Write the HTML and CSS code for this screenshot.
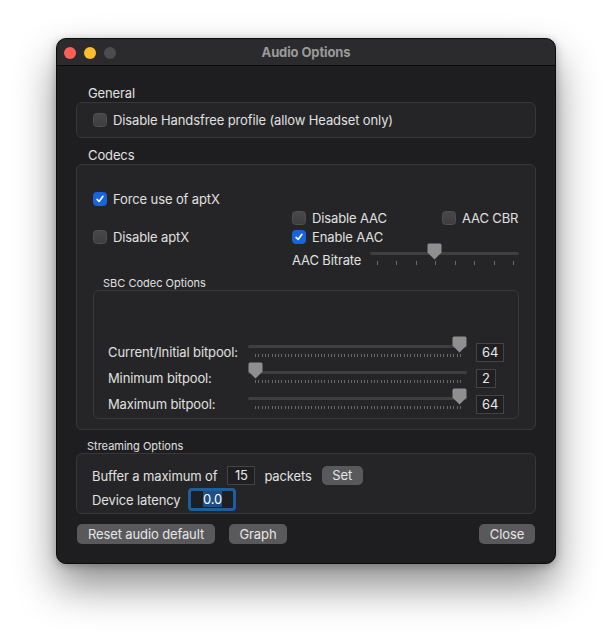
FILE: index.html
```html
<!DOCTYPE html>
<html lang="en">
<head>
    <meta charset="UTF-8">
    <title>Audio Options</title>
    <link rel="stylesheet" href="styles.css">
</head>
<body>
    <div class="window">
        <div class="titlebar">
            <div class="lights">
                <span class="light red"></span>
                <span class="light yellow"></span>
                <span class="light off"></span>
            </div>
            <div class="title">Audio Options</div>
            <div></div>
        </div>

        <div class="content">
            <div class="group-title">General</div>
            <div class="box general">
                <label class="check"><span class="cb"></span>Disable Handsfree profile (allow Headset only)</label>
            </div>

            <div class="group-title">Codecs</div>
            <div class="box codecs">
                <div class="codec-grid">
                    <label class="check force"><span class="cb on"><svg viewBox="0 0 14 14"><path d="M3.6 7.4 L6 9.9 L10.4 3.9"/></svg></span>Force use of aptX</label>
                    <label class="check dis-aac"><span class="cb"></span>Disable AAC</label>
                    <label class="check aac-cbr"><span class="cb"></span>AAC CBR</label>
                    <label class="check dis-aptx"><span class="cb"></span>Disable aptX</label>
                    <label class="check en-aac"><span class="cb on"><svg viewBox="0 0 14 14"><path d="M3.6 7.4 L6 9.9 L10.4 3.9"/></svg></span>Enable AAC</label>
                    <div class="bitrate">
                        <span class="bitrate-label">AAC Bitrate</span>
                        <div class="slider aac">
                            <div class="track"></div>
                            <div class="ticks"></div>
                            <svg class="thumb" style="left: calc((100% - 15px) * 0.4286)" viewBox="0 0 15 17"><path d="M2 0.5 H13 Q14.5 0.5 14.5 2 V9.5 L7.5 16.5 L0.5 9.5 V2 Q0.5 0.5 2 0.5 Z"/></svg>
                        </div>
                    </div>
                </div>

                <div class="sub-title">SBC Codec Options</div>
                <div class="box sbc">
                    <div class="sbc-row">
                        <span class="sbc-label">Current/Initial bitpool:</span>
                        <div class="slider sbc-slider">
                            <div class="track"></div>
                            <div class="ticks"></div>
                            <svg class="thumb" style="left: calc((100% - 15px) * 1)" viewBox="0 0 15 17"><path d="M2 0.5 H13 Q14.5 0.5 14.5 2 V9.5 L7.5 16.5 L0.5 9.5 V2 Q0.5 0.5 2 0.5 Z"/></svg>
                        </div>
                        <span class="value">64</span>
                    </div>
                    <div class="sbc-row">
                        <span class="sbc-label">Minimum bitpool:</span>
                        <div class="slider sbc-slider">
                            <div class="track"></div>
                            <div class="ticks"></div>
                            <svg class="thumb" style="left: calc((100% - 15px) * 0)" viewBox="0 0 15 17"><path d="M2 0.5 H13 Q14.5 0.5 14.5 2 V9.5 L7.5 16.5 L0.5 9.5 V2 Q0.5 0.5 2 0.5 Z"/></svg>
                        </div>
                        <span class="value">2</span>
                    </div>
                    <div class="sbc-row">
                        <span class="sbc-label">Maximum bitpool:</span>
                        <div class="slider sbc-slider">
                            <div class="track"></div>
                            <div class="ticks"></div>
                            <svg class="thumb" style="left: calc((100% - 15px) * 1)" viewBox="0 0 15 17"><path d="M2 0.5 H13 Q14.5 0.5 14.5 2 V9.5 L7.5 16.5 L0.5 9.5 V2 Q0.5 0.5 2 0.5 Z"/></svg>
                        </div>
                        <span class="value">64</span>
                    </div>
                </div>
            </div>

            <div class="sub-title stream-title">Streaming Options</div>
            <div class="box streaming">
                <div class="stream-row first">
                    <span>Buffer a maximum of</span>
                    <span class="num-input">15</span>
                    <span>packets</span>
                    <span class="btn set">Set</span>
                </div>
                <div class="stream-row second">
                    <span>Device latency</span>
                    <span class="num-input focused"><span class="selected">0.0</span></span>
                </div>
            </div>

            <div class="buttons">
                <span class="btn reset">Reset audio default</span>
                <span class="btn graph">Graph</span>
                <span class="btn close">Close</span>
            </div>
        </div>
    </div>
</body>
</html>
```

FILE: styles.css
```css
* {
    box-sizing: border-box;
}

html {
    background-color: #ffffff;
}

body {
    margin: 0;
    min-height: 639px;
    padding: 38px 0 75px 56px;
    font-family: Inter, "Liberation Sans", Arial, sans-serif;
    font-size: 13px;
    letter-spacing: -0.12px;
    color: #e0e0e0;
}

/* Window frame */
.window {
    width: 500px;
    height: 526px;
    background-color: #1e1e20;
    border: 1px solid #0c0c0c;
    border-radius: 10px;
    overflow: hidden;
    box-shadow: 0 22px 42px rgba(0, 0, 0, 0.45), 0 2px 8px rgba(0, 0, 0, 0.25);
}

.titlebar {
    height: 27px;
    background-color: #2b2b2d;
    border-bottom: 1px solid #0a0a0a;
    display: grid;
    grid-template-columns: 1fr auto 1fr;
    align-items: center;
}

.lights {
    display: flex;
    gap: 8px;
    padding-left: 7px;
    padding-top: 1px;
}

.light {
    width: 12px;
    height: 12px;
    border-radius: 50%;
}

.light.red { background-color: #fe5f57; }
.light.yellow { background-color: #febc2e; }
.light.off { background-color: #4c4c4e; }

.title {
    font-weight: 700;
    color: #9a9a9a;
}

/* Content */
.content {
    padding: 19px 19px 0 19px;
}

.group-title {
    height: 17px;
    line-height: 17px;
    padding-left: 12px;
}

.sub-title {
    height: 14px;
    line-height: 14px;
    font-size: 11px;
    letter-spacing: 0;
    margin-top: 4px;
    padding-left: 10px;
}

.box {
    background-color: #252527;
    border: 1px solid #38383a;
    border-radius: 6px;
}

.general {
    height: 36px;
    margin-bottom: 9px;
    display: flex;
    align-items: center;
    padding-left: 16px;
}

.check {
    display: flex;
    align-items: center;
    gap: 6px;
    white-space: nowrap;
}

.cb {
    width: 14px;
    height: 14px;
    flex-shrink: 0;
    border-radius: 3.5px;
    background: linear-gradient(#48484a, #3e3e40);
    border: 1px solid #505052;
    display: flex;
}

.cb.on {
    background: #1764de;
    border-color: #1764de;
}

.cb svg {
    width: 12px;
    height: 12px;
    fill: none;
    stroke: #ffffff;
    stroke-width: 1.9;
    stroke-linecap: round;
    stroke-linejoin: round;
}

/* Codecs */
.codecs {
    padding: 25px 16px 10px 16px;
}

.codec-grid {
    display: grid;
    grid-template-columns: 199px 150px 1fr;
    grid-template-rows: 18px 19px 20px 25px;
    align-items: center;
}

.force { grid-row: 1; grid-column: 1; }
.dis-aac { grid-row: 2; grid-column: 2; }
.aac-cbr { grid-row: 2; grid-column: 3; }
.dis-aptx { grid-row: 3; grid-column: 1; }
.en-aac { grid-row: 3; grid-column: 2; }

.bitrate {
    grid-row: 4;
    grid-column: 2 / 4;
    display: flex;
    align-items: center;
}

.bitrate-label {
    width: 78px;
}

/* Sliders */
.slider {
    position: relative;
    height: 26px;
}

.slider.aac {
    width: 150px;
    margin-top: -2px;
}

.track {
    position: absolute;
    left: 0;
    right: 0;
    top: 6px;
    height: 3px;
    border-radius: 2px;
    background-color: #3f3f41;
}

.ticks {
    position: absolute;
    left: 7px;
    right: 6px;
    top: 15px;
    height: 3px;
    background: repeating-linear-gradient(to right, #686868 0 1px, transparent 1px 3.306px);
}

.aac .ticks {
    right: 5px;
    height: 4px;
    background: repeating-linear-gradient(to right, #686868 0 1px, transparent 1px 19.43px);
}

.thumb {
    position: absolute;
    top: -3px;
    width: 15px;
    height: 17px;
    fill: #8f8f8f;
}

/* SBC options */
.sbc {
    padding: 48px 0 1px 14px;
}

.sbc-row {
    display: flex;
    align-items: center;
    height: 26px;
}

.sbc-label {
    width: 140px;
}

.sbc-slider {
    width: 219px;
}

.value {
    margin-left: 9px;
    height: 19px;
    line-height: 17px;
    padding: 0 5px;
    border: 1px solid #444446;
    background-color: #1f1f21;
    color: #e8e8e8;
}

/* Streaming options */
.stream-title {
    margin-top: 9px;
    padding-left: 11px;
}

.streaming {
    padding: 12px 15px 2px 15px;
}

.stream-row {
    display: flex;
    align-items: center;
}

.stream-row.first {
    height: 19px;
}

.stream-row.second {
    height: 23px;
    margin-top: 3px;
}

.num-input {
    width: 28px;
    height: 19px;
    line-height: 17px;
    margin: 0 9px 0 10px;
    border: 1px solid #444446;
    background-color: #1f1f21;
    text-align: center;
    color: #e8e8e8;
}

.num-input.focused {
    width: 48px;
    height: 23px;
    line-height: 17px;
    margin-left: 8px;
    border: 3px solid #1c5f9d;
    border-radius: 4px;
}

.selected {
    background-color: #1d4f85;
    color: #ffffff;
}

.btn {
    height: 20px;
    line-height: 20px;
    border-radius: 5px;
    background-color: #59595b;
    color: #e6e6e6;
    text-align: center;
}

.btn.set {
    width: 41px;
    height: 19px;
    line-height: 19px;
    margin-left: 10px;
}

/* Bottom buttons */
.buttons {
    display: flex;
    margin-top: 10px;
    padding: 0 1px;
}

.reset { width: 138px; }
.graph { width: 58px; margin-left: 14px; }
.close { width: 56px; margin-left: auto; }
```
